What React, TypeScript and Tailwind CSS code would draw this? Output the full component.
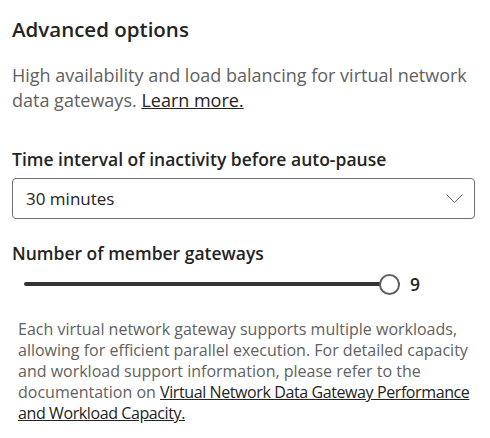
export default function App() {
  return (
    <div
      className="w-[490px] h-[438px] bg-white px-3 pt-[15px] text-[#242424]"
      style={{ fontFamily: '"Open Sans", "Noto Sans", sans-serif' }}
    >
      <h2 className="text-[20.5px] font-semibold leading-[28px]">Advanced options</h2>

      <p className="mt-[20px] w-[462px] text-[18px] leading-[25px] text-[#616161]">
        High availability and load balancing for virtual network data gateways.{" "}
        <a href="#" className="underline text-[#242424]">
          Learn more.
        </a>
      </p>

      <label className="block mt-[34px] text-[17.5px] font-semibold leading-[24px]">
        Time interval of inactivity before auto-pause
      </label>
      <button className="mt-[7px] flex h-[41px] w-[463px] items-center justify-between rounded-[4px] border border-[#707070] pl-[13px] pr-[11px] text-[17px] text-[#242424]">
        <span>30 minutes</span>
        <svg width="17" height="9" viewBox="0 0 17 9" fill="none">
          <path d="M0.5 0.5l8 8 8-8" stroke="#616161" strokeWidth="1" />
        </svg>
      </button>

      <label className="block mt-[22px] text-[17.5px] font-semibold leading-[24px]">
        Number of member gateways
      </label>
      <div className="mt-[8px] flex h-[22px] items-center pl-[12px]">
        <div className="relative flex h-[22px] w-[376px] items-center">
          <div className="h-[4px] w-full rounded-full bg-[#333333]" />
          <div className="absolute right-0 h-[21px] w-[21px] rounded-full border-2 border-[#616161] bg-white" />
        </div>
        <span className="ml-[10px] text-[17.5px] font-semibold">9</span>
      </div>

      <p className="mt-[24px] ml-[6px] whitespace-nowrap text-[16px] leading-[21px] text-[#616161]">
        Each virtual network gateway supports multiple workloads,
        <br />
        allowing for efficient parallel execution. For detailed capacity
        <br />
        and workload support information, please refer to the
        <br />
        documentation on{" "}
        <a href="#" className="underline tracking-[-0.4px] text-[#242424]">
          Virtual Network Data Gateway Performance
          <br />
          and Workload Capacity.
        </a>
      </p>
    </div>
  );
}
